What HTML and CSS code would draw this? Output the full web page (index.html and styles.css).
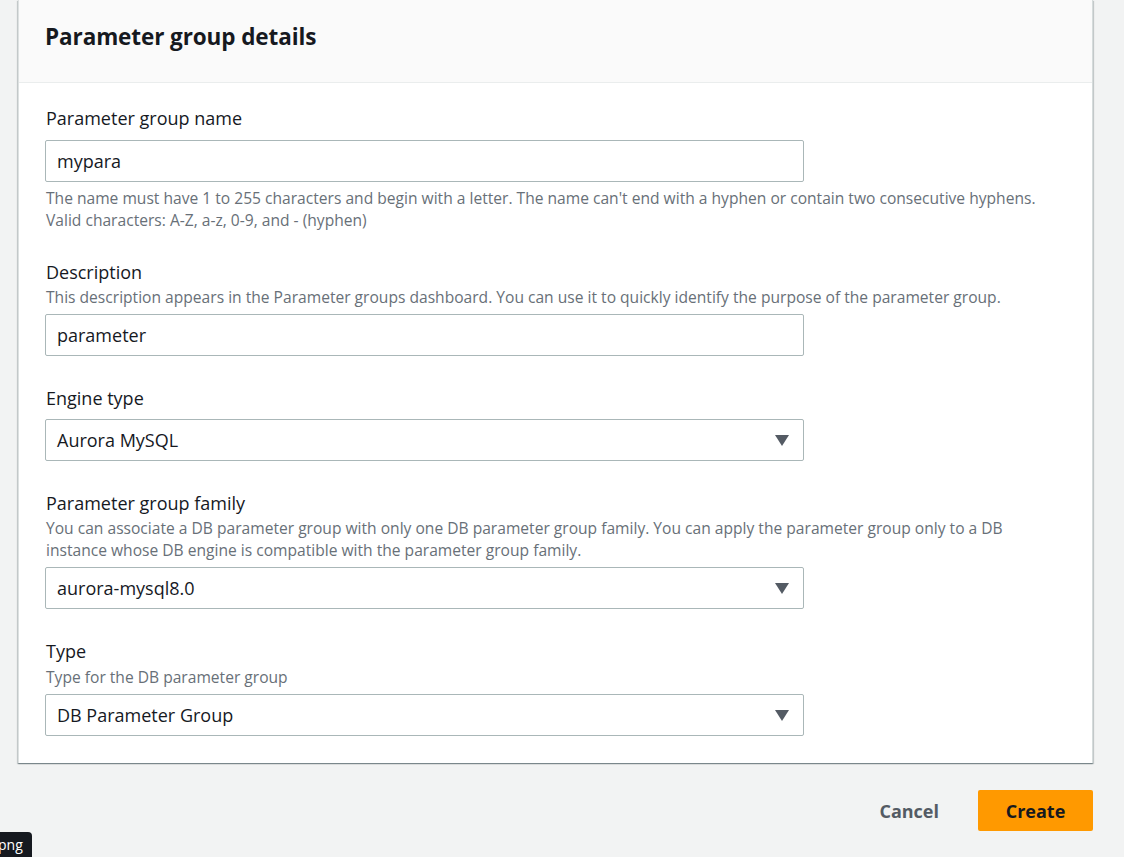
FILE: index.html
```html
<!DOCTYPE html>
<html lang="en">
<head>
<meta charset="utf-8">
<title>Create parameter group</title>
<link rel="stylesheet" href="styles.css">
</head>
<body>
<div class="page">
  <section class="card">
    <header class="card-header"><h2>Parameter group details</h2></header>
    <div class="card-body">
      <div class="field first">
        <label class="label">Parameter group name</label>
        <div class="control input">mypara</div>
        <p class="hint">The name must have 1 to 255 characters and begin with a letter. The name can't end with a hyphen or contain two consecutive hyphens.<br>Valid characters: A-Z, a-z, 0-9, and - (hyphen)</p>
      </div>
      <div class="field">
        <label class="label">Description</label>
        <p class="desc">This description appears in the Parameter groups dashboard. You can use it to quickly identify the purpose of the parameter group.</p>
        <div class="control input">parameter</div>
      </div>
      <div class="field">
        <label class="label">Engine type</label>
        <div class="control select"><span>Aurora MySQL</span><svg class="caret" width="14" height="11" viewBox="0 0 14 11"><path d="M0 0h14L7 11z" fill="#545b64"/></svg></div>
      </div>
      <div class="field">
        <label class="label">Parameter group family</label>
        <p class="desc">You can associate a DB parameter group with only one DB parameter group family. You can apply the parameter group only to a DB<br>instance whose DB engine is compatible with the parameter group family.</p>
        <div class="control select"><span>aurora-mysql8.0</span><svg class="caret" width="14" height="11" viewBox="0 0 14 11"><path d="M0 0h14L7 11z" fill="#545b64"/></svg></div>
      </div>
      <div class="field last">
        <label class="label">Type</label>
        <p class="desc">Type for the DB parameter group</p>
        <div class="control select"><span>DB Parameter Group</span><svg class="caret" width="14" height="11" viewBox="0 0 14 11"><path d="M0 0h14L7 11z" fill="#545b64"/></svg></div>
      </div>
    </div>
  </section>
  <div class="actions">
    <button class="btn-link">Cancel</button>
    <button class="btn-primary">Create</button>
  </div>
</div>
<div class="tip">png</div>
</body>
</html>
```
FILE: styles.css
```css
* { box-sizing: border-box; }
html, body { margin: 0; padding: 0; }
body {
  background: #f2f3f3;
  font-family: "Open Sans", "Noto Sans", Arial, sans-serif;
  color: #16191f;
  width: 1124px;
  height: 857px;
  overflow: hidden;
  position: relative;
}
.page { padding: 0 31px 0 18px; }
.card {
  background: #fff;
  border-left: 1px solid #dde1e1;
  border-right: 1px solid #d5dbdb;
  box-shadow: 0 1px 1px 0 rgba(0,28,36,.3), 1px 1px 1px 0 rgba(0,28,36,.15), -1px 1px 1px 0 rgba(0,28,36,.15);
}
.card-header {
  height: 83px;
  background: #fafafa;
  border-bottom: 1px solid #eaeded;
  padding: 20px 26px 0;
}
.card-header h2 {
  margin: 0;
  font-size: 22.5px;
  line-height: 34px;
  font-weight: 700;
  letter-spacing: -0.1px;
}
.card-body { padding: 22px 26px 27px; }
.field { margin-bottom: 29px; }
.field.first { margin-bottom: 28px; }
.field.last { margin-bottom: 0; }
.label {
  display: block;
  font-size: 18px;
  line-height: 26px;
  color: #16191f;
  padding-left: 1px;
}
.label + .control { margin-top: 8px; }
.field.first .label + .control { margin-top: 9px; }
.desc {
  margin: 1px 0 6px;
  font-size: 15.6px;
  line-height: 22px;
  color: #687078;
  padding-left: 1px;
}
.field.last .desc { margin-top: 2px; }
.hint {
  margin: 5px 0 0;
  font-size: 15.6px;
  line-height: 22px;
  color: #687078;
  padding-left: 1px;
}
.control {
  width: 759px;
  height: 42px;
  border: 1px solid #aab7b8;
  border-radius: 2px;
  display: flex;
  align-items: center;
  justify-content: space-between;
  padding: 0 14px 0 11px;
  font-size: 18px;
  color: #16191f;
}
.caret { display: block; }
.actions {
  display: flex;
  justify-content: flex-end;
  align-items: center;
  gap: 39px;
  padding-top: 27px;
}
.btn-link {
  background: none;
  border: 0;
  font: inherit;
  font-size: 18px;
  font-weight: 700;
  color: #545b64;
  padding: 0;
}
.btn-primary {
  background: #ff9900;
  border: 0;
  border-radius: 2px;
  font: inherit;
  font-size: 18px;
  font-weight: 700;
  color: #16191f;
  width: 115px;
  height: 41px;
}
.tip {
  position: absolute;
  left: 0;
  top: 832px;
  width: 32px;
  height: 25px;
  background: #16191f;
  border-top-right-radius: 4px;
  color: #fff;
  font-size: 14px;
  line-height: 25px;
  text-indent: -2px;
}
```
